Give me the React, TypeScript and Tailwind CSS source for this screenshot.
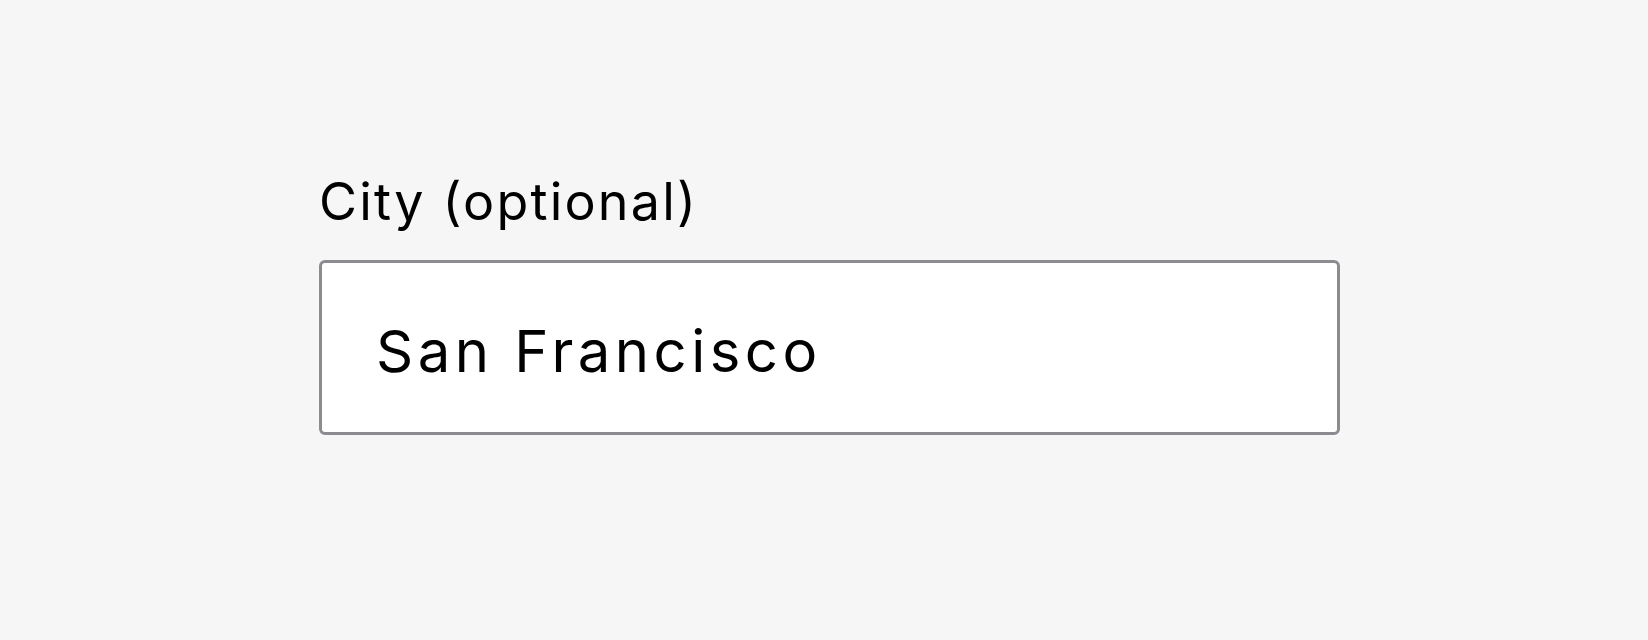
export default function App() {
  return (
    <div className="min-h-screen w-full bg-[#f6f6f6] pt-[176px] pl-[319px] pr-[308px] font-['Inter',sans-serif] text-black">
      <label htmlFor="city" className="block text-[52px] leading-none tracking-[2.2px]">
        City (optional)
      </label>
      <input
        id="city"
        type="text"
        defaultValue="San Francisco"
        className="mt-[32px] block h-[175px] w-full rounded-[6px] border-[3px] border-[#8b8c8f] bg-white pt-[7px] pl-[54px] text-[58px] leading-none tracking-[4.5px] text-black outline-none"
      />
    </div>
  );
}
